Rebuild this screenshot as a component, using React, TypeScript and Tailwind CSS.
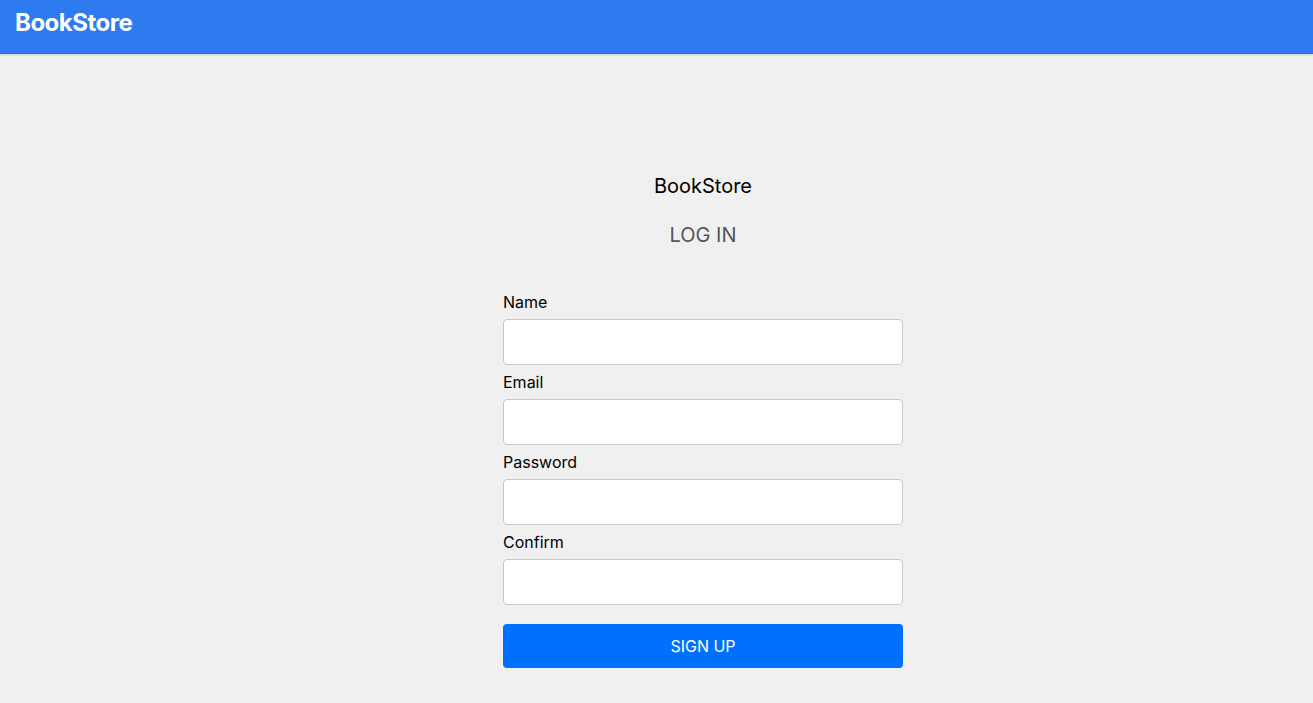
import React from "react";

const fields = ["Name", "Email", "Password", "Confirm"];

export default function App() {
  return (
    <div className="min-h-[703px] bg-[#f0f0f0]" style={{ fontFamily: "Inter, 'Liberation Sans', sans-serif" }}>
      <header className="h-[54px] bg-[#2e7bef] border-b border-[#2a6fd8] shadow-[0_1px_2px_rgba(0,0,0,0.15)] flex items-center px-[15px]">
        <h1 className="text-white text-[24px] font-bold leading-none tracking-[-0.5px] -mt-[8px]">BookStore</h1>
      </header>
      <main className="flex flex-col items-center pt-[120px] pl-[93px]">
        <div className="text-[20px] leading-[24px] text-black">BookStore</div>
        <div className="mt-[25px] text-[20px] leading-[24px] text-[#555]">LOG IN</div>
        <form className="mt-[45px] w-[400px] flex flex-col">
          {fields.map((f, i) => (
            <div key={f} className={i === 0 ? "" : "mt-[7px]"}>
              <label className="block text-[16px] leading-[20px] text-black">{f}</label>
              <input
                type={f === "Password" || f === "Confirm" ? "password" : "text"}
                className="mt-[7px] block w-full h-[46px] rounded-[4px] border border-[#c8c8c8] bg-white outline-none"
              />
            </div>
          ))}
          <button type="button" className="mt-[19px] h-[44px] w-full rounded-[4px] bg-[#0071fe] text-white text-[16px]">
            SIGN UP
          </button>
        </form>
      </main>
    </div>
  );
}
